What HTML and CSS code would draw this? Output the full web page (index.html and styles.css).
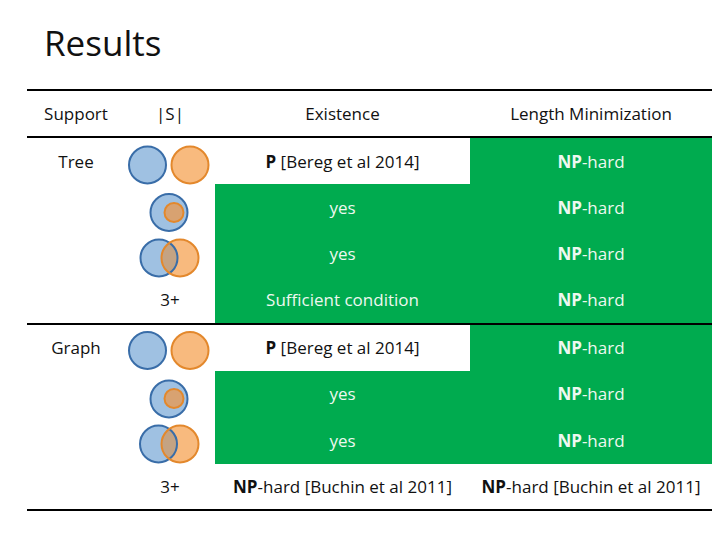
FILE: index.html
```html
<!DOCTYPE html>
<html>
<head>
<meta charset="utf-8">
<link rel="stylesheet" href="styles.css">
</head>
<body>
<div class="slide">
  <h1 class="title">Results</h1>
  <table class="results">
    <colgroup>
      <col class="c-support"><col class="c-size"><col class="c-exist"><col class="c-len">
    </colgroup>
    <thead>
      <tr class="head">
        <th>Support</th><th>|S|</th><th>Existence</th><th>Length Minimization</th>
      </tr>
    </thead>
    <tbody>
      <tr>
        <td class="label">Tree</td>
        <td class="shape"><svg viewBox="0 0 90 46" width="90" height="46"><circle class="b" cx="22.5" cy="27" r="18.5"/><circle class="o" cx="65" cy="27" r="18.5"/></svg></td>
        <td><b>P</b> [Bereg et al 2014]</td>
        <td class="green"><b>NP</b>-hard</td>
      </tr>
      <tr>
        <td></td>
        <td class="shape"><svg viewBox="0 0 90 46" width="90" height="46"><circle class="b" cx="44" cy="28.5" r="18.5"/><circle class="oin" cx="49" cy="28.5" r="9.5"/></svg></td>
        <td class="green">yes</td>
        <td class="green"><b>NP</b>-hard</td>
      </tr>
      <tr>
        <td></td>
        <td class="shape"><svg viewBox="0 0 90 46" width="90" height="46"><defs><clipPath id="cb1"><circle cx="34" cy="27" r="18.5"/></clipPath></defs><circle class="bf" cx="34" cy="27" r="18.5"/><circle class="of" cx="55" cy="27" r="18.5"/><circle class="mix" cx="55" cy="27" r="18.5" clip-path="url(#cb1)"/><circle class="bs" cx="34" cy="27" r="18.5"/><circle class="os" cx="55" cy="27" r="18.5"/></svg></td>
        <td class="green">yes</td>
        <td class="green"><b>NP</b>-hard</td>
      </tr>
      <tr>
        <td></td>
        <td>3+</td>
        <td class="green">Sufficient condition</td>
        <td class="green"><b>NP</b>-hard</td>
      </tr>
    </tbody>
    <tbody>
      <tr>
        <td class="label">Graph</td>
        <td class="shape"><svg viewBox="0 0 90 46" width="90" height="46"><circle class="b" cx="22.5" cy="25.5" r="18.5"/><circle class="o" cx="65" cy="25.5" r="18.5"/></svg></td>
        <td><b>P</b> [Bereg et al 2014]</td>
        <td class="green"><b>NP</b>-hard</td>
      </tr>
      <tr>
        <td></td>
        <td class="shape"><svg viewBox="0 0 90 46" width="90" height="46"><circle class="b" cx="44" cy="28" r="18.5"/><circle class="oin" cx="49" cy="27.5" r="9.5"/></svg></td>
        <td class="green">yes</td>
        <td class="green"><b>NP</b>-hard</td>
      </tr>
      <tr>
        <td></td>
        <td class="shape"><svg viewBox="0 0 90 46" width="90" height="46"><defs><clipPath id="cb2"><circle cx="33.5" cy="27" r="18.5"/></clipPath></defs><circle class="bf" cx="33.5" cy="27" r="18.5"/><circle class="of" cx="55" cy="27" r="18.5"/><circle class="mix" cx="55" cy="27" r="18.5" clip-path="url(#cb2)"/><circle class="bs" cx="33.5" cy="27" r="18.5"/><circle class="os" cx="55" cy="27" r="18.5"/></svg></td>
        <td class="green">yes</td>
        <td class="green"><b>NP</b>-hard</td>
      </tr>
      <tr>
        <td></td>
        <td>3+</td>
        <td><b>NP</b>-hard [Buchin et al 2011]</td>
        <td><b>NP</b>-hard [Buchin et al 2011]</td>
      </tr>
    </tbody>
  </table>
</div>
</body>
</html>
```

FILE: styles.css
```css
html, body {
  margin: 0;
  padding: 0;
  background: #ffffff;
}

.slide {
  width: 720px;
  height: 540px;
  font-family: "Open Sans", "Noto Sans", sans-serif;
  color: #111111;
  overflow: hidden;
}

.title {
  margin: 0;
  padding: 23px 0 0 44px;
  height: 65px;
  box-sizing: border-box;
  font-size: 35px;
  font-weight: 400;
  line-height: 40px;
  color: #111111;
}

.results {
  margin: 24px 0 0 27px;
  width: 685px;
  border-collapse: collapse;
  table-layout: fixed;
  border-top: 2px solid #000;
  border-bottom: 2px solid #000;
  font-size: 17px;
}

.c-support { width: 98px; }
.c-size { width: 90px; }
.c-exist { width: 255px; }
.c-len { width: 242px; }

.results th {
  font-weight: 400;
  height: 45px;
  padding: 0;
  text-align: center;
  border-bottom: 2px solid #000;
}

.results td {
  height: 46.5px;
  padding: 0;
  text-align: center;
  vertical-align: middle;
  box-sizing: border-box;
}

.results tbody + tbody tr:first-child td {
  border-top: 2px solid #000;
}

.results b {
  font-weight: 700;
}

.results td.green {
  background: #00ab4f;
  color: #eef8f0;
}

.results td.shape svg {
  display: block;
  overflow: visible;
}

.b, .bf { fill: #9fc1e2; }
.b, .bs { stroke: #396da8; stroke-width: 2; }
.o, .of { fill: #f8ba7e; }
.o, .os { stroke: #e3882c; stroke-width: 2; }
.bf, .of, .mix { stroke: none; }
.bs, .os { fill: none; }
.mix { fill: #c4a383; }
.oin { fill: #d8a271; stroke: #e3882c; stroke-width: 2; }
```
